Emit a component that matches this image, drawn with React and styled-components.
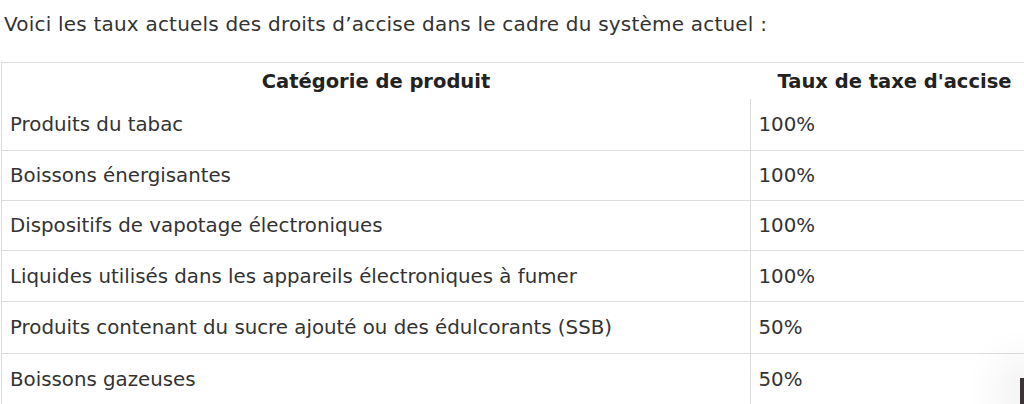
import React from "react";
import styled, { createGlobalStyle } from "styled-components";

const GlobalStyle = createGlobalStyle`
  html, body {
    margin: 0;
    padding: 0;
    background: #fff;
    overflow: hidden;
  }
  body {
    font-family: "DejaVu Sans", Verdana, sans-serif;
    color: #333;
  }
`;

const Page = styled.div`
  width: 1024px;
  height: 404px;
  overflow: hidden;
  position: relative;
`;

const Intro = styled.p`
  margin: 0;
  padding: 11px 0 0 4px;
  height: 62px;
  box-sizing: border-box;
  font-size: 20px;
  letter-spacing: 0.2px;
  line-height: 26px;
  color: #333;
`;

const Table = styled.table`
  margin-left: 1px;
  width: 1038px;
  border-collapse: collapse;
  border-top: 1px solid #ddd;
  border-left: 1px solid #ddd;
`;

const HeadCell = styled.th`
  height: 36px;
  padding: 0 8px;
  font-size: 19.5px;
  font-weight: bold;
  color: #222;
  text-align: center;
  width: ${(p) => p.$w};
`;

const Cell = styled.td`
  height: ${(p) => p.$h}px;
  padding: 0 8px;
  font-size: 19.8px;
  border-bottom: 1px solid #ddd;
  border-left: ${(p) => (p.$value ? "1px solid #ddd" : "none")};
  color: #333;
  vertical-align: middle;
`;

const Corner = styled.div`
  position: absolute;
  right: 0;
  bottom: 0;
  width: 4px;
  height: 26px;
  background: #3a3437;
  box-shadow: 0 0 40px 20px rgba(0, 0, 0, 0.06);
`;

const rows = [
  ["Produits du tabac", "100%", 51],
  ["Boissons énergisantes", "100%", 49],
  ["Dispositifs de vapotage électroniques", "100%", 49],
  ["Liquides utilisés dans les appareils électroniques à fumer", "100%", 50],
  ["Produits contenant du sucre ajouté ou des édulcorants (SSB)", "50%", 51],
  ["Boissons gazeuses", "50%", 50],
];

export default function App() {
  return (
    <Page>
      <GlobalStyle />
      <Intro>Voici les taux actuels des droits d’accise dans le cadre du système actuel :</Intro>
      <Table>
        <thead>
          <tr>
            <HeadCell $w="732px">Catégorie de produit</HeadCell>
            <HeadCell>Taux de taxe d'accise</HeadCell>
          </tr>
        </thead>
        <tbody>
          {rows.map(([name, rate, h]) => (
            <tr key={name}>
              <Cell $h={h}>{name}</Cell>
              <Cell $h={h} $value>
                {rate}
              </Cell>
            </tr>
          ))}
        </tbody>
      </Table>
      <Corner />
    </Page>
  );
}
